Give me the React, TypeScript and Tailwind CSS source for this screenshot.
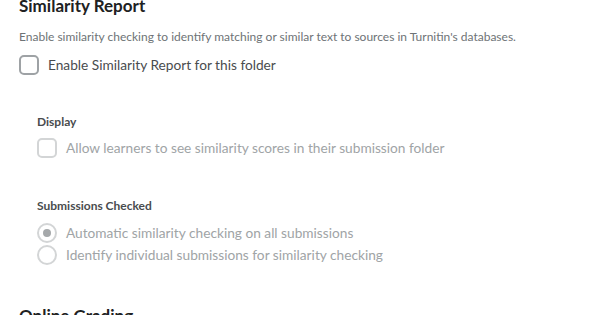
import React from "react";

function Checkbox({ disabled }: { disabled?: boolean }) {
  return (
    <span
      className={
        "box-border block h-[20px] w-[20px] shrink-0 rounded-[5px] border-2 bg-white " +
        (disabled ? "border-[#d3d5d6]" : "border-[#9ea2a5]")
      }
    />
  );
}

function Radio({ checked }: { checked?: boolean }) {
  return (
    <span className="box-border flex h-[20px] w-[20px] shrink-0 items-center justify-center rounded-full border-2 border-[#d3d5d6] bg-white">
      {checked && <span className="block h-[8px] w-[8px] rounded-full bg-[#a5a8aa]" />}
    </span>
  );
}

export default function App() {
  return (
    <div
      className="h-[315px] w-[600px] overflow-hidden bg-white px-[19px] text-[#494c4e]"
      style={{ fontFamily: "Lato, 'Open Sans', sans-serif" }}
    >
      <h2 className="mt-[-5px] text-[17px] font-bold leading-[22px] text-[#202122]">Similarity Report</h2>

      <p className="mt-[12px] text-[12px] leading-[16px] text-[#6e7376]">
        Enable similarity checking to identify matching or similar text to sources in Turnitin's databases.
      </p>

      <label className="mt-[10px] flex items-center gap-[9px]">
        <Checkbox />
        <span className="text-[13.7px] leading-[18px] text-[#494c4e]">Enable Similarity Report for this folder</span>
      </label>

      <div className="pl-[18px]">
        <div className="mt-[39px] text-[12px] font-bold leading-[16px] text-[#494c4e]">Display</div>
        <label className="mt-[8px] flex items-center gap-[9px]">
          <Checkbox disabled />
          <span className="text-[13.7px] leading-[18px] text-[#a0a4a6]">
            Allow learners to see similarity scores in their submission folder
          </span>
        </label>

        <div className="mt-[40px] text-[12px] font-bold leading-[16px] text-[#494c4e]">Submissions Checked</div>
        <div className="mt-[9px] flex flex-col gap-[2px]">
          <label className="flex items-center gap-[9px]">
            <Radio checked />
            <span className="text-[13.7px] leading-[18px] text-[#a0a4a6]">Automatic similarity checking on all submissions</span>
          </label>
          <label className="flex items-center gap-[9px]">
            <Radio />
            <span className="text-[13.7px] leading-[18px] text-[#a0a4a6]">Identify individual submissions for similarity checking</span>
          </label>
        </div>
      </div>

      <h2 className="mt-[40px] text-[17px] font-bold leading-[22px] text-[#202122]">Online Grading</h2>
    </div>
  );
}
